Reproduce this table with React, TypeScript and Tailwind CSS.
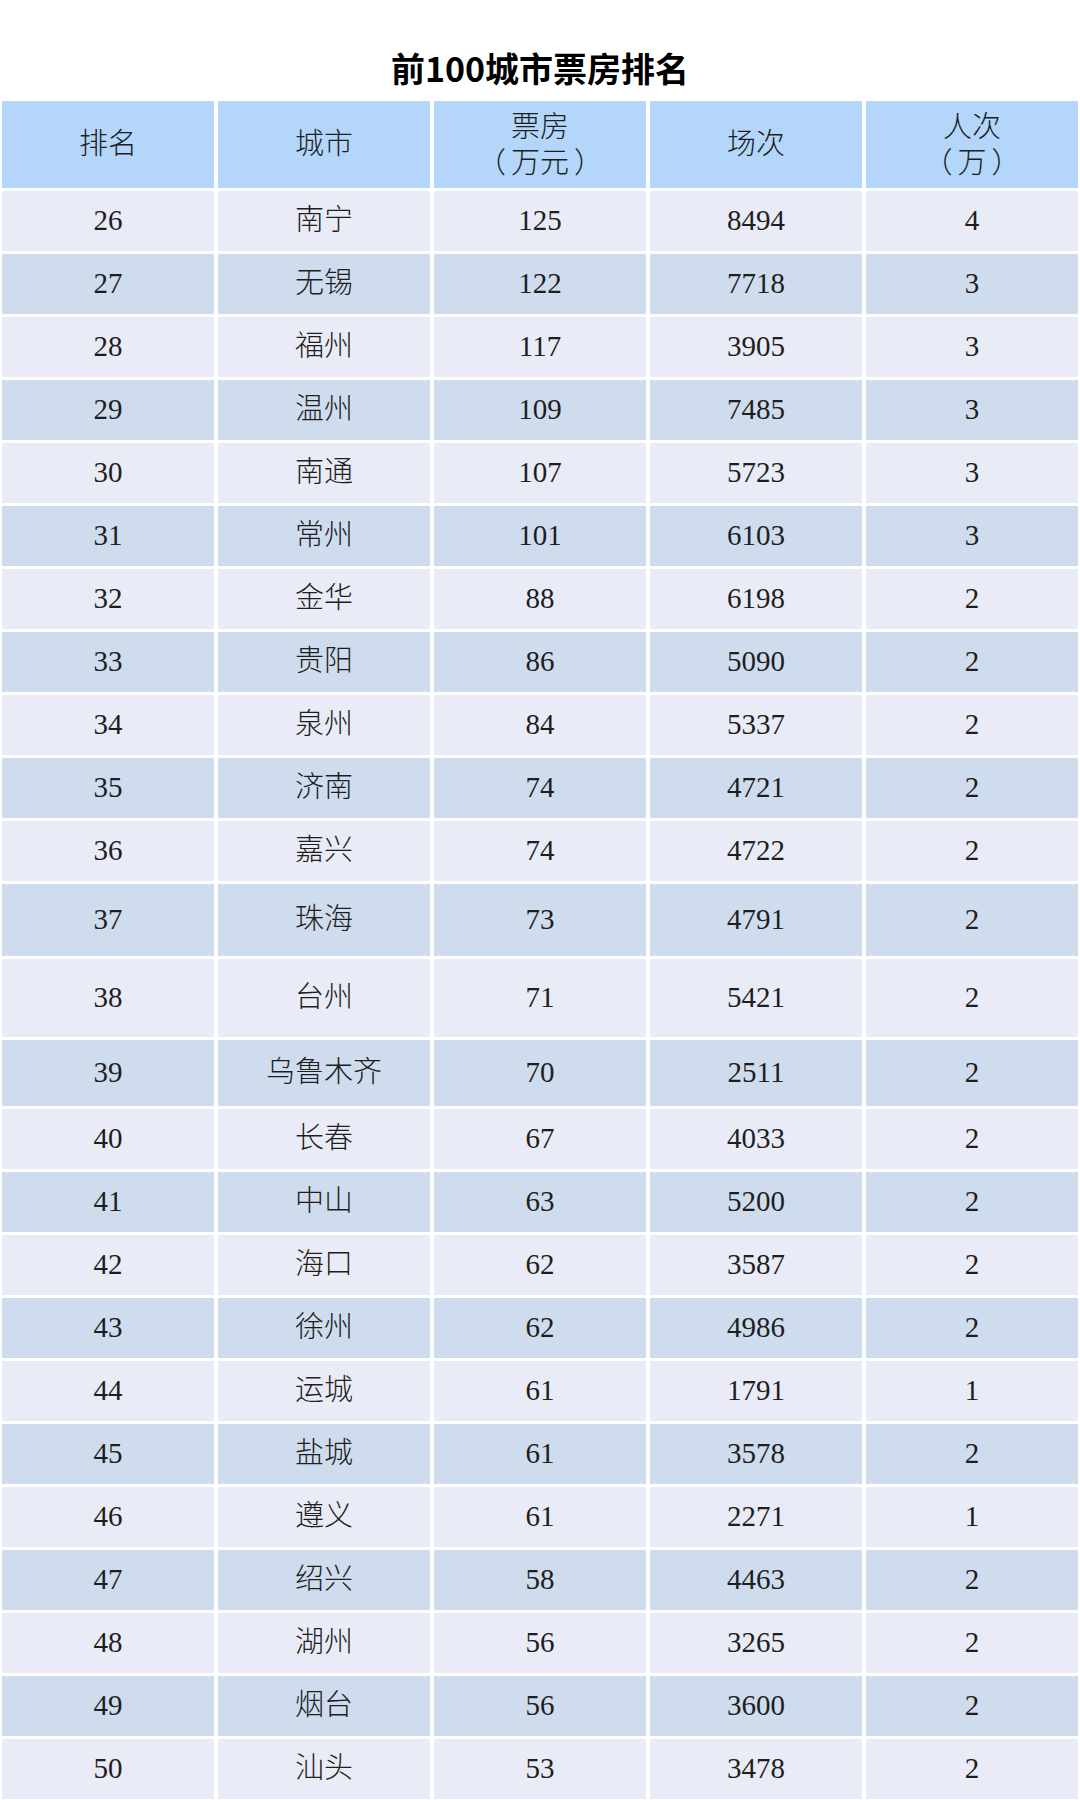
import React from "react";

type Row = { rank: string; city: string; box: string; shows: string; people: string; h: string; dark: boolean };

const raw: [string, string, string, string, string][] = [
  ["26", "南宁", "125", "8494", "4"],
  ["27", "无锡", "122", "7718", "3"],
  ["28", "福州", "117", "3905", "3"],
  ["29", "温州", "109", "7485", "3"],
  ["30", "南通", "107", "5723", "3"],
  ["31", "常州", "101", "6103", "3"],
  ["32", "金华", "88", "6198", "2"],
  ["33", "贵阳", "86", "5090", "2"],
  ["34", "泉州", "84", "5337", "2"],
  ["35", "济南", "74", "4721", "2"],
  ["36", "嘉兴", "74", "4722", "2"],
  ["37", "珠海", "73", "4791", "2"],
  ["38", "台州", "71", "5421", "2"],
  ["39", "乌鲁木齐", "70", "2511", "2"],
  ["40", "长春", "67", "4033", "2"],
  ["41", "中山", "63", "5200", "2"],
  ["42", "海口", "62", "3587", "2"],
  ["43", "徐州", "62", "4986", "2"],
  ["44", "运城", "61", "1791", "1"],
  ["45", "盐城", "61", "3578", "2"],
  ["46", "遵义", "61", "2271", "1"],
  ["47", "绍兴", "58", "4463", "2"],
  ["48", "湖州", "56", "3265", "2"],
  ["49", "烟台", "56", "3600", "2"],
  ["50", "汕头", "53", "3478", "2"],
];

const heightFor = (rank: string) => {
  if (rank === "37") return "h-[72px]";
  if (rank === "38") return "h-[78px]";
  if (rank === "39") return "h-[66px]";
  return "h-[60px]";
};

const rows: Row[] = raw.map(([rank, city, box, shows, people], i) => ({
  rank,
  city,
  box,
  shows,
  people,
  h: heightFor(rank),
  dark: i % 2 === 1,
}));

const fontStack = "font-['Liberation_Serif','Noto_Sans_CJK_SC',serif]";

function Cell({ children, bg, h }: { children: React.ReactNode; bg: string; h: string }) {
  return (
    <div className={`${bg} ${h} flex flex-col items-center justify-center text-[29px] font-light text-[#1e1e1e] ${fontStack}`}>
      {children}
    </div>
  );
}

export default function App() {
  return (
    <div className="w-[1080px] h-[1800px] overflow-hidden bg-white">
      <div className="h-[101px] pt-[48px] text-center">
        <h1 className="text-[34px] leading-[40px] font-bold text-black font-['Noto_Sans_CJK_SC',sans-serif]">
          前100城市票房排名
        </h1>
      </div>
      <div className="flex flex-col gap-[3px] px-[2px]">
        <div className="grid grid-cols-5 gap-x-[4px]">
          <Cell bg="bg-[#b3d6fa]" h="h-[87px]">排名</Cell>
          <Cell bg="bg-[#b3d6fa]" h="h-[87px]">城市</Cell>
          <Cell bg="bg-[#b3d6fa]" h="h-[87px]">
            <span className="leading-[36px]">票房</span>
            <span className="leading-[36px] flex items-center gap-[5px]">
              <span>（</span>
              <span>万元</span>
              <span>）</span>
            </span>
          </Cell>
          <Cell bg="bg-[#b3d6fa]" h="h-[87px]">场次</Cell>
          <Cell bg="bg-[#b3d6fa]" h="h-[87px]">
            <span className="leading-[36px]">人次</span>
            <span className="leading-[36px] flex items-center gap-[5px]">
              <span>（</span>
              <span>万</span>
              <span>）</span>
            </span>
          </Cell>
        </div>
        {rows.map((r) => {
          const bg = r.dark ? "bg-[#cfdcee]" : "bg-[#e9ecf6]";
          return (
            <div key={r.rank} className="grid grid-cols-5 gap-x-[4px]">
              <Cell bg={bg} h={r.h}>{r.rank}</Cell>
              <Cell bg={bg} h={r.h}>{r.city}</Cell>
              <Cell bg={bg} h={r.h}>{r.box}</Cell>
              <Cell bg={bg} h={r.h}>{r.shows}</Cell>
              <Cell bg={bg} h={r.h}>{r.people}</Cell>
            </div>
          );
        })}
      </div>
    </div>
  );
}
